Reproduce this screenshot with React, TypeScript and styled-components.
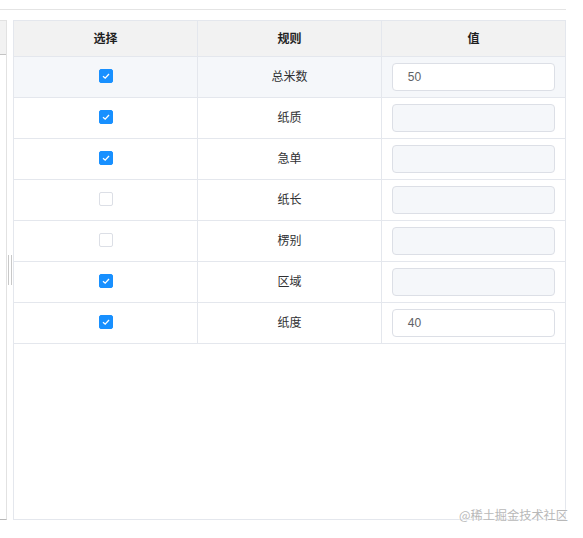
import styled, { createGlobalStyle } from "styled-components";

const GlobalStyle = createGlobalStyle`
  html, body {
    margin: 0;
    padding: 0;
    background: #fff;
  }
  body {
    font-family: "Noto Sans CJK SC", "Liberation Sans", sans-serif;
    font-size: 12px;
    color: #303133;
  }
`;

// ============================================================================
// LAYOUT
// ============================================================================

const Page = styled.div`
  position: relative;
  width: 583px;
  height: 538px;
  overflow: hidden;
`;

const TopRule = styled.div`
  margin-top: 9px;
  width: 566px;
  border-top: 1px solid #e4e4e4;
`;

const Split = styled.div`
  display: flex;
  margin-top: 10px;
  height: 500px;
`;

const SidePanel = styled.div`
  width: 6px;
  border-right: 1px solid #e2e2e2;
  border-bottom: 1px solid #b8b8b8;
  display: flex;
  flex-direction: column;
`;

const SideHeader = styled.div`
  height: 33px;
  background: #f2f2f2;
  border-top: 1px solid #e2e2e2;
  border-bottom: 1px solid #c4c4c4;
`;

const Gutter = styled.div`
  width: 6px;
  display: flex;
  align-items: center;
  justify-content: center;
`;

const Grip = styled.div`
  display: flex;
  gap: 2px;
  height: 30px;

  &::before,
  &::after {
    content: "";
    width: 1px;
    background: #c8c8c8;
  }
`;

const TableBox = styled.div`
  width: 551px;
  border: 1px solid #e4e7ed;
  background: #fff;
`;

const Grid = styled.table`
  width: 100%;
  border-collapse: collapse;
  table-layout: fixed;
`;

const HeadCell = styled.th`
  box-sizing: border-box;
  height: 35px;
  padding: 0 0 2px;
  background: #f2f2f2;
  border-bottom: 1px solid #e4e7ed;
  border-right: 1px solid #e4e7ed;
  font-size: 12px;
  font-weight: 700;
  color: #1f1f1f;
  text-align: center;

  &:last-child {
    border-right: none;
  }
`;

const Row = styled.tr<{ $highlight?: boolean }>`
  background: ${(p) => (p.$highlight ? "#f5f7fa" : "#fff")};
`;

const Cell = styled.td`
  height: 38px;
  padding: 0 10px 2px;
  border-bottom: 1px solid #e4e7ed;
  border-right: 1px solid #e4e7ed;
  text-align: center;
  font-size: 12px;
  line-height: 16px;
  color: #303133;

  &:last-child {
    border-right: none;
    padding: 1px 10px;
  }
`;

const CheckBox = styled.span<{ $checked: boolean }>`
  display: flex;
  align-items: center;
  justify-content: center;
  margin: 0 auto;
  width: 14px;
  height: 14px;
  box-sizing: border-box;
  border-radius: 2px;
  background: ${(p) => (p.$checked ? "#1890ff" : "#fff")};
  border: 1px solid ${(p) => (p.$checked ? "#1890ff" : "#dcdfe6")};
`;

const ValueInput = styled.div<{ $disabled: boolean }>`
  height: 28px;
  box-sizing: border-box;
  border: 1px solid #dcdfe6;
  border-radius: 4px;
  background: ${(p) => (p.$disabled ? "#f5f7fa" : "#fff")};
  padding: 0 15px;
  display: flex;
  align-items: center;
  font-family: "Liberation Sans", Arial, sans-serif;
  font-size: 12px;
  color: #606266;
  text-align: left;
`;

const Watermark = styled.div`
  position: absolute;
  right: 15px;
  top: 506px;
  font-size: 12.2px;
  color: #b8b8b8;
  text-shadow: 0 0 2px #fff;
  white-space: nowrap;
`;

// ============================================================================
// DATA
// ============================================================================

const rules = [
  { name: "总米数", checked: true, value: "50" },
  { name: "纸质", checked: true, value: null },
  { name: "急单", checked: true, value: null },
  { name: "纸长", checked: false, value: null },
  { name: "楞别", checked: false, value: null },
  { name: "区域", checked: true, value: null },
  { name: "纸度", checked: true, value: "40" },
];

// ============================================================================
// COMPONENT
// ============================================================================

function Tick() {
  return (
    <svg width="10" height="10" viewBox="0 0 10 10">
      <path d="M2 5.2 L4.2 7.2 L8 3" fill="none" stroke="#fff" strokeWidth="1.3" />
    </svg>
  );
}

export default function App() {
  return (
    <Page>
      <GlobalStyle />
      <TopRule />
      <Split>
        <SidePanel>
          <SideHeader />
        </SidePanel>
        <Gutter>
          <Grip />
        </Gutter>
        <TableBox>
          <Grid>
            <thead>
              <tr>
                <HeadCell>选择</HeadCell>
                <HeadCell>规则</HeadCell>
                <HeadCell>值</HeadCell>
              </tr>
            </thead>
            <tbody>
              {rules.map((rule, i) => (
                <Row key={rule.name} $highlight={i === 0}>
                  <Cell>
                    <CheckBox $checked={rule.checked}>{rule.checked && <Tick />}</CheckBox>
                  </Cell>
                  <Cell>{rule.name}</Cell>
                  <Cell>
                    <ValueInput $disabled={rule.value === null}>{rule.value}</ValueInput>
                  </Cell>
                </Row>
              ))}
            </tbody>
          </Grid>
        </TableBox>
      </Split>
      <Watermark>@稀土掘金技术社区</Watermark>
    </Page>
  );
}
